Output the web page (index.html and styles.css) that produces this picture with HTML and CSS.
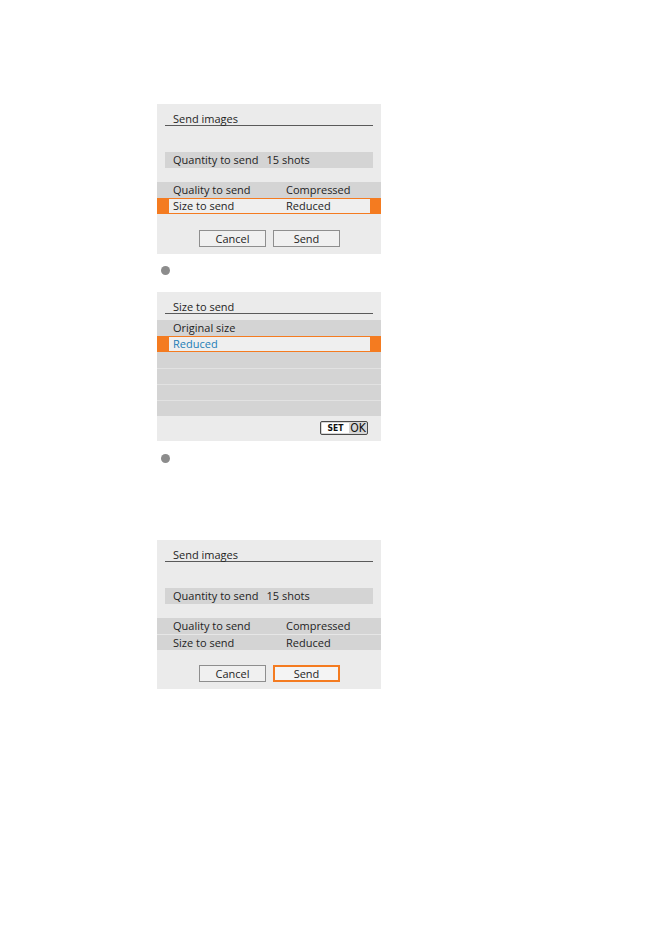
FILE: index.html
```html
<!DOCTYPE html>
<html lang="en">
<head>
<meta charset="utf-8">
<title>Send images</title>
<link rel="stylesheet" href="styles.css">
</head>
<body>
<div class="page">
  <div class="panel p1">
    <div class="title">Send images</div>
    <div class="qty"><span>Quantity to send</span><span class="qty-val">15 shots</span></div>
    <div class="rows">
      <div class="row"><span class="lbl">Quality to send</span><span class="val">Compressed</span></div>
      <div class="row sel"><div class="inner"><span class="lbl">Size to send</span><span class="val">Reduced</span></div></div>
    </div>
    <div class="btns">
      <div class="btn">Cancel</div>
      <div class="btn">Send</div>
    </div>
  </div>

  <div class="bullet b1"></div>

  <div class="panel p2">
    <div class="title">Size to send</div>
    <div class="list">
      <div class="row">Original size</div>
      <div class="row sel"><div class="inner blue">Reduced</div></div>
      <div class="row"></div>
      <div class="row"></div>
      <div class="row"></div>
      <div class="row"></div>
    </div>
    <div class="setbar">
      <div class="setok"><span class="set">SET</span><span class="ok">OK</span></div>
    </div>
  </div>

  <div class="bullet b2"></div>

  <div class="panel p3">
    <div class="title">Send images</div>
    <div class="qty"><span>Quantity to send</span><span class="qty-val">15 shots</span></div>
    <div class="rows">
      <div class="row"><span class="lbl">Quality to send</span><span class="val">Compressed</span></div>
      <div class="row"><span class="lbl">Size to send</span><span class="val">Reduced</span></div>
    </div>
    <div class="btns">
      <div class="btn">Cancel</div>
      <div class="btn active">Send</div>
    </div>
  </div>
</div>
</body>
</html>
```
FILE: styles.css
```css
html, body {
  margin: 0;
  padding: 0;
  background: #ffffff;
}
body {
  font-family: "Open Sans", "Noto Sans", "Liberation Sans", sans-serif;
  color: #1e1e1e;
  font-size: 11px;
}
.page {
  padding-top: 104px;
  padding-left: 157px;
  display: flex;
  flex-direction: column;
  align-items: flex-start;
}
.panel {
  width: 224px;
  height: 150px;
  background: #ebebeb;
  box-sizing: border-box;
  display: flex;
  flex-direction: column;
}
.p2, .p3 { height: 149px; }
.title {
  margin: 0 8px;
  padding: 7px 0 0 8px;
  height: 14px;
  line-height: 15px;
  border-bottom: 1px solid #5a5a5a;
}
.qty {
  margin: 26px 8px 0;
  height: 16px;
  line-height: 16px;
  background: #d4d4d4;
  padding-left: 8px;
  display: flex;
}
.qty-val { margin-left: 8px; }
.rows {
  margin-top: 14px;
  display: flex;
  flex-direction: column;
}
.row {
  height: 16px;
  line-height: 16px;
  background: #d4d4d4;
  display: flex;
  padding-left: 16px;
  box-sizing: border-box;
}
.p3 .rows .row + .row { border-top: 1px solid #e6e6e6; line-height: 15px; }
.lbl { width: 113px; }
.row.sel {
  background: #f47b20;
  padding: 1px 11px 1px 12px;
}
.inner {
  flex: 1;
  background: #efefef;
  display: flex;
  padding-left: 4px;
  line-height: 14px;
}
.inner .lbl { width: 113px; }
.blue { color: #1c7db6; }
.btns {
  margin-top: 16px;
  display: flex;
  gap: 7px;
  padding-left: 42px;
}
.p3 .btns { margin-top: 15px; }
.btn {
  width: 67px;
  height: 17px;
  box-sizing: border-box;
  border: 1px solid #8e8e8e;
  background: #f0f0f0;
  text-align: center;
  line-height: 15px;
}
.btn.active {
  border: 2px solid #f47b20;
  background: #f4f4f4;
  line-height: 13px;
}
.list {
  margin-top: 6px;
  display: flex;
  flex-direction: column;
}
.list .row + .row:not(.sel) { border-top: 1px solid #e2e2e2; }
.list .row.sel + .row { border-top: none; }
.setbar {
  display: flex;
  justify-content: flex-end;
  padding: 5px 13px 0 0;
}
.setok {
  width: 48px;
  height: 14px;
  box-sizing: border-box;
  border: 1px solid #4a4a4a;
  border-radius: 2px;
  background: #d6d6d6;
  display: flex;
  align-items: stretch;
  overflow: hidden;
}
.set {
  width: 27px;
  background: #ffffff;
  margin: 1px 0 1px 1px;
  font-family: "DejaVu Sans Condensed", "DejaVu Sans", sans-serif;
  font-weight: bold;
  font-size: 8.5px;
  line-height: 10px;
  text-align: center;
  color: #111;
}
.ok {
  flex: 1;
  font-family: "DejaVu Sans Condensed", "DejaVu Sans", sans-serif;
  font-size: 12px;
  line-height: 12px;
  text-align: center;
  color: #111;
}
.bullet {
  width: 9px;
  height: 9px;
  border-radius: 50%;
  background: #8c8c8c;
  margin-left: 4px;
}
.b1 { margin-top: 12px; margin-bottom: 17px; }
.b2 { margin-top: 13px; margin-bottom: 77px; }
```
